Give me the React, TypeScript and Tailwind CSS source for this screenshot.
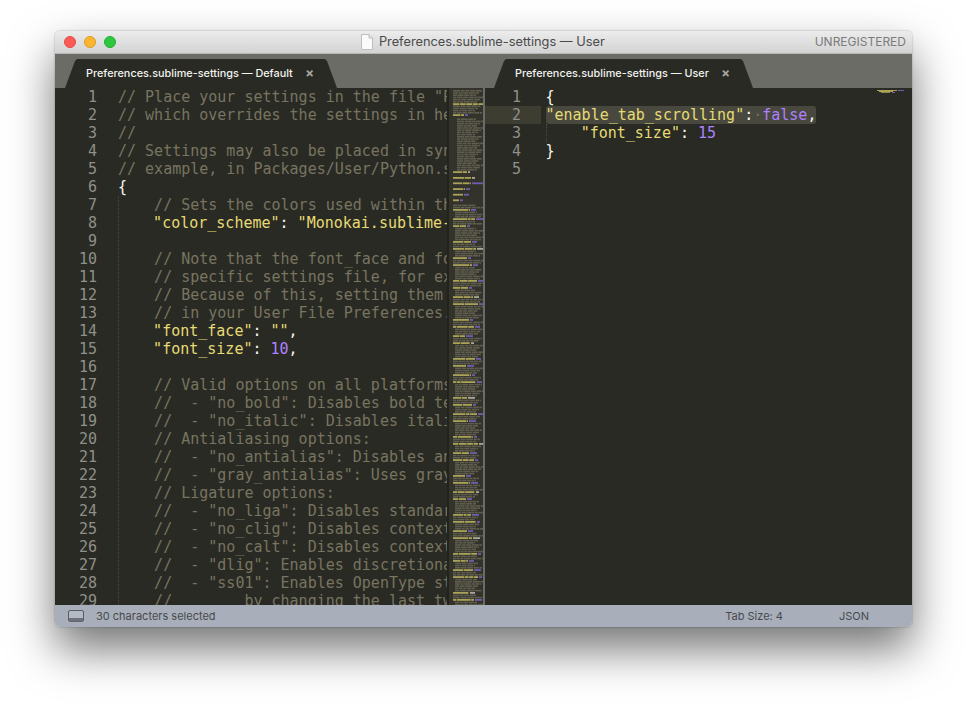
const leftLines: [string, string][] = [
  ["c", '// Place your settings in the file "Packages/User/Preferences.sublime-settings",'],
  ["c", "// which overrides the settings in here."],
  ["c", "//"],
  ["c", "// Settings may also be placed in syntax-specific setting files, for"],
  ["c", "// example, in Packages/User/Python.sublime-settings for python files."],
  ["t", "{"],
  ["c", "    // Sets the colors used within the text area"],
  ["s", '    "color_scheme": "Monokai.sublime-color-scheme",'],
  ["t", ""],
  ["c", "    // Note that the font_face and font_size are overridden in the platform"],
  ["c", '    // specific settings file, for example, "Preferences (Linux).sublime-settings".'],
  ["c", "    // Because of this, setting them here will have no effect: you must set them"],
  ["c", "    // in your User File Preferences."],
  ["s", '    "font_face": "",'],
  ["n", '    "font_size": 10,'],
  ["t", ""],
  ["c", "    // Valid options on all platforms are:"],
  ["c", '    //  - "no_bold": Disables bold text'],
  ["c", '    //  - "no_italic": Disables italic text'],
  ["c", "    // Antialiasing options:"],
  ["c", '    //  - "no_antialias": Disables antialiasing'],
  ["c", '    //  - "gray_antialias": Uses grayscale antialiasing instead of subpixel'],
  ["c", "    // Ligature options:"],
  ["c", '    //  - "no_liga": Disables standard ligatures (OpenType liga feature)'],
  ["c", '    //  - "no_clig": Disables contextual ligatures (OpenType clig feature)'],
  ["c", '    //  - "no_calt": Disables contextual alternates (OpenType calt feature)'],
  ["c", '    //  - "dlig": Enables discretionary ligatures (OpenType dlig feature)'],
  ["c", '    //  - "ss01": Enables OpenType stylistic set 1'],
  ["c", "    //        by changing the last two digits"],
];

function CodeLine({ kind, text }: { kind: string; text: string }) {
  if (kind === "c") return <div className="h-[18px] text-[#787460]">{text}</div>;
  if (kind === "t") return <div className="h-[18px] text-[#f8f8f2]">{text}</div>;
  if (kind === "s") {
    const i = text.indexOf(":");
    return (
      <div className="h-[18px] -ml-px text-[#e6db74]">
        {text.slice(0, i)}
        <span className="text-[#f8f8f2]">:</span>
        {text.slice(i + 1, -1)}
        <span className="text-[#f8f8f2]">,</span>
      </div>
    );
  }
  return (
    <div className="h-[18px] -ml-px text-[#e6db74]">
      {'    "font_size"'}
      <span className="text-[#f8f8f2]">: </span>
      <span className="text-[#ae81ff]">10</span>
      <span className="text-[#f8f8f2]">,</span>
    </div>
  );
}

// tiny text rows: word-like dashes, seeded so the picture stays the same
function rowSegments(y: number, start: number, end: number, seed: number, fill: string, h: number, maxWord: number) {
  const out = [];
  let s = seed * 7919 + 17;
  let x = start;
  while (x < end) {
    s = (s * 1103515245 + 12345) & 0x7fffffff;
    const w = 3 + (s >> 8) % maxWord;
    out.push(<rect key={`${y}-${x}`} x={x} y={y} width={Math.min(w, end - x)} height={h} fill={fill} />);
    x += w + 0.6;
  }
  return out;
}

function Minimap() {
  const items = [];
  let y = 2;
  let n = 0;
  const gray = "#5f5d4d";
  const yellow = "#aaa258";
  const purple = "#6f5cae";
  const grayRows = (count: number, indent: number) => {
    for (let i = 0; i < count; i++) {
      n++;
      const end = 26 + ((n * 37) % 10);
      items.push(...rowSegments(y, indent, Math.min(end, 34), n, gray, 1.6, 5));
      y += 2.2;
    }
  };
  const yellowRow = (len: number, tail: number, tailColor = purple) => {
    n++;
    items.push(...rowSegments(y, 4, 4 + len, n, yellow, 1.8, 14));
    if (tail) items.push(<rect key={`t${n}`} x={5 + len} y={y} width={tail} height="1.8" fill={tailColor} />);
    y += 2.2;
  };
  grayRows(6, 4);
  yellowRow(30, 0);
  grayRows(4, 4);
  yellowRow(11, 3);
  y += 2;
  grayRows(24, 8);
  yellowRow(14, 2, "#a8a89a");
  y += 3.6;
  yellowRow(18, 3, "#a8a89a");
  y += 3.2;
  yellowRow(18, 12);
  y += 3.6;
  yellowRow(12, 4);
  y += 3.4;
  yellowRow(10, 5);
  y += 3.4;
  yellowRow(6, 3);
  y += 3;
  // rest of the settings file: a key with its value, then a comment block
  let k = 0;
  while (y < 517) {
    k++;
    grayRows(k % 4 === 0 ? 6 : k % 4 === 2 ? 3 : 2, k % 2 ? 4 : 6);
    yellowRow(12 + ((k * 5) % 14), 3 + (k % 3) * 2, k % 5 === 0 ? "#a8a89a" : purple);
    y += 0.4;
  }
  return (
    <div className="w-[36px] shrink-0 bg-[#33332c] overflow-hidden border-l-2 border-[#23231e]">
      <svg width="34" height="517" className="block">
        {items}
      </svg>
    </div>
  );
}

function Tab({ title, width }: { title: string; width: string }) {
  return (
    <div
      className={`${width} h-[29px] bg-[#292a24] flex items-center pl-[21px] [clip-path:polygon(0_100%,10px_2px,12px_0,calc(100%-12px)_0,calc(100%-10px)_2px,100%_100%)]`}
    >
      <span className="text-[10.85px] font-medium text-[#f2f2ee] whitespace-nowrap leading-none">{title}</span>
      <span className="ml-auto mr-[23px] text-[13px] font-bold text-[#a8a8a2] leading-none">×</span>
    </div>
  );
}

export default function App() {
  return (
    <div className="w-[968px] h-[707px] bg-white pt-[31px] pl-[55px] overflow-hidden font-['Inter',sans-serif]">
      <div className="w-[857px] h-[596px] rounded-[5px] overflow-hidden flex flex-col shadow-[0_22px_45px_rgba(0,0,0,0.55),0_0_2px_rgba(0,0,0,0.35)]">
        {/* title bar */}
        <div className="h-[23px] shrink-0 flex items-center bg-gradient-to-b from-[#ececec] to-[#d3d3d3] border-b border-[#b5b5b5]">
          <div className="flex items-center gap-[8px] pl-[9px]">
            <span className="w-[12px] h-[12px] rounded-full bg-[#fb5b57] border border-[#e34a46]" />
            <span className="w-[12px] h-[12px] rounded-full bg-[#fdb52f] border border-[#e09b22]" />
            <span className="w-[12px] h-[12px] rounded-full bg-[#2dc83f] border border-[#24ac32]" />
          </div>
          <div className="flex-1 flex items-center justify-center gap-[6px] pl-[35px]">
            <svg width="12" height="16" viewBox="0 0 12 16">
              <path d="M0.5 0.5H8L11.5 4V15.5H0.5Z" fill="#fafafa" stroke="#bdbdbd" />
              <path d="M8 0.5V4H11.5" fill="#e2e2e2" stroke="#bdbdbd" />
            </svg>
            <span className="text-[12.8px] text-[#4a4a4a] whitespace-nowrap">Preferences.sublime-settings — User</span>
          </div>
          <span className="pr-[6px] text-[12px] text-[#7b7b7b] whitespace-nowrap">UNREGISTERED</span>
        </div>

        {/* tabs */}
        <div className="h-[34px] shrink-0 bg-[#6b6c66] flex items-end">
          <div className="w-[430px] pl-[10px] shrink-0">
            <Tab title="Preferences.sublime-settings — Default" width="w-[272px]" />
          </div>
          <div className="pl-[9px]">
            <Tab title="Preferences.sublime-settings — User" width="w-[259px]" />
          </div>
        </div>

        {/* panes */}
        <div className="flex-1 min-h-0 flex bg-[#292a24] font-['DejaVu_Sans_Mono',monospace] text-[15px] leading-[18px]">
          <div className="w-[428px] shrink-0 flex overflow-hidden">
            <div className="w-[42px] shrink-0 text-right text-[#8f908a]">
              {leftLines.map((_, i) => (
                <div key={i} className="h-[18px]">{i + 1}</div>
              ))}
            </div>
            <div className="relative flex-1 min-w-0 pl-[21px] overflow-hidden whitespace-pre">
              <div className="absolute left-[21px] top-[108px] bottom-0 border-l border-dotted border-[#4c4c41]" />
              {leftLines.map(([k, t], i) => (
                <CodeLine key={i} kind={k} text={t} />
              ))}
            </div>
            <Minimap />
          </div>
          <div className="w-[2px] shrink-0 bg-[#6b6c66]" />
          <div className="flex-1 min-w-0 flex">
            <div className="w-[56px] shrink-0 text-right text-[#8f908a]">
              {[1, 2, 3, 4, 5].map((n) => (
                <div key={n} className={`h-[18px] pr-[20px] ${n === 2 ? "bg-[#3e3d32]" : ""}`}>{n}</div>
              ))}
            </div>
            <div className="relative flex-1 pl-[4.5px] whitespace-pre text-[#f8f8f2]">
              <div className="absolute left-[5px] top-[36px] h-[18px] border-l border-dotted border-[#4c4c41]" />
              <div className="h-[18px]">{"{"}</div>
              <div className="h-[18px]">
                <span className="inline-block h-[18px] rounded-[3px] bg-[#49483e]">
                  <span className="text-[#e6db74]">"enable_tab_scrolling"</span>:<span className="text-[#75715e]">·</span>
                  <span className="text-[#ae81ff]">false</span>,
                </span>
              </div>
              <div className="h-[18px] -ml-px">
                {"    "}
                <span className="text-[#e6db74]">"font_size"</span>: <span className="text-[#ae81ff]">15</span>
              </div>
              <div className="h-[18px]">{"}"}</div>
            </div>
            <div className="w-[36px] shrink-0 pl-[1px] pr-[6px]">
              <svg width="29" height="6" viewBox="0 0 29 6" className="block mt-[2px]">
                <rect x="0" y="0" width="20" height="1" fill="#aaa258" />
                <rect x="21" y="0" width="6" height="1" fill="#6f5cae" />
                <rect x="2" y="1" width="14" height="1" fill="#aaa258" />
                <rect x="4" y="2" width="9" height="1" fill="#8f8a50" />
                <rect x="15" y="2" width="3" height="1" fill="#6f5cae" />
              </svg>
            </div>
          </div>
        </div>

        {/* status bar */}
        <div className="h-[22px] shrink-0 bg-[#a9afba] flex items-center text-[11px] text-[#47494e]">
          <svg className="ml-[13px]" width="16" height="12" viewBox="0 0 16 12">
            <rect x="0.5" y="0.5" width="15" height="11" rx="1.5" fill="#b4bac4" stroke="#5a5d64" />
            <rect x="1" y="8" width="14" height="3.5" fill="#6d7078" />
          </svg>
          <span className="ml-[12px]">30 characters selected</span>
          <span className="ml-auto">Tab Size: 4</span>
          <span className="ml-[56px] mr-[43px]">JSON</span>
        </div>
      </div>
    </div>
  );
}
